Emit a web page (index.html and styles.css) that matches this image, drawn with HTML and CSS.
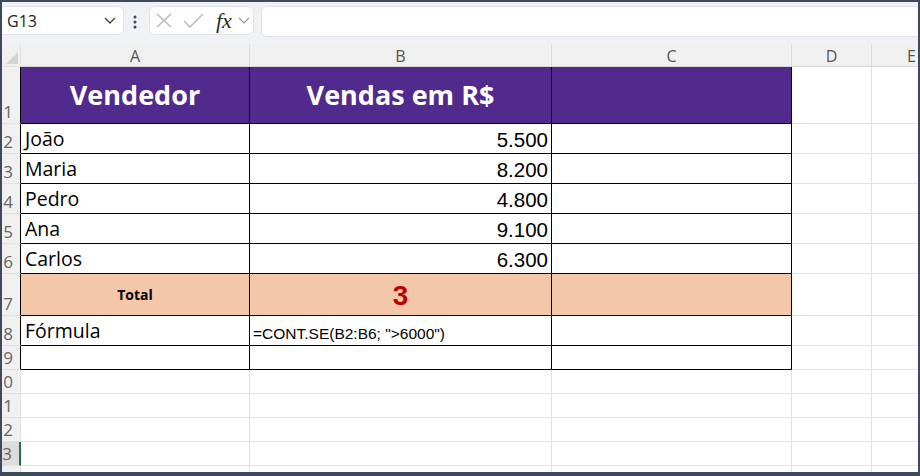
FILE: index.html
```html
<!DOCTYPE html>
<html lang="pt-BR">
<head>
  <meta charset="UTF-8">
  <meta name="viewport" content="width=device-width, initial-scale=1.0">
  <title>CONT.SE - Vendas</title>
  <link rel="stylesheet" href="styles.css">
</head>
<body>
  <div class="app">
    <div class="toolbar">
      <div class="namebox">
        <span>G13</span>
        <svg width="12" height="7" viewBox="0 0 12 7"><path d="M1 1 L6 6 L11 1" fill="none" stroke="#444" stroke-width="1.4"/></svg>
      </div>
      <svg class="grip" width="4" height="14" viewBox="0 0 4 14"><circle cx="2" cy="2" r="1.5"/><circle cx="2" cy="7" r="1.5"/><circle cx="2" cy="12" r="1.5"/></svg>
      <div class="fxbox">
        <svg width="16" height="15" viewBox="0 0 16 15"><path d="M1 1 L15 14 M15 1 L1 14" fill="none" stroke="#b4b4b4" stroke-width="1.3"/></svg>
        <svg width="21" height="15" viewBox="0 0 21 15"><path d="M1 8 L7 14 L20 1" fill="none" stroke="#b4b4b4" stroke-width="1.3"/></svg>
        <span class="fx">fx</span>
        <svg width="12" height="7" viewBox="0 0 12 7"><path d="M1 1 L6 6 L11 1" fill="none" stroke="#999" stroke-width="1.2"/></svg>
      </div>
      <div class="formula"></div>
    </div>

    <div class="sheet">
      <!-- column headers -->
      <div class="corner"></div>
      <div class="hd">A</div>
      <div class="hd">B</div>
      <div class="hd">C</div>
      <div class="hd">D</div>
      <div class="hd">E</div>

      <div class="rh tb">1</div>
      <div class="c t head">Vendedor</div>
      <div class="c t head">Vendas em R$</div>
      <div class="c t head"></div>
      <div class="c"></div><div class="c"></div>

      <div class="rh tb">2</div>
      <div class="c t name">João</div>
      <div class="c t num">5.500</div>
      <div class="c t"></div>
      <div class="c"></div><div class="c"></div>

      <div class="rh tb">3</div>
      <div class="c t name">Maria</div>
      <div class="c t num">8.200</div>
      <div class="c t"></div>
      <div class="c"></div><div class="c"></div>

      <div class="rh tb">4</div>
      <div class="c t name">Pedro</div>
      <div class="c t num">4.800</div>
      <div class="c t"></div>
      <div class="c"></div><div class="c"></div>

      <div class="rh tb">5</div>
      <div class="c t name">Ana</div>
      <div class="c t num">9.100</div>
      <div class="c t"></div>
      <div class="c"></div><div class="c"></div>

      <div class="rh tb">6</div>
      <div class="c t name">Carlos</div>
      <div class="c t num">6.300</div>
      <div class="c t"></div>
      <div class="c"></div><div class="c"></div>

      <div class="rh tb">7</div>
      <div class="c t tot label">Total</div>
      <div class="c t tot result">3</div>
      <div class="c t tot"></div>
      <div class="c"></div><div class="c"></div>

      <div class="rh tb">8</div>
      <div class="c t name">Fórmula</div>
      <div class="c t code">=CONT.SE(B2:B6; "&gt;6000")</div>
      <div class="c t"></div>
      <div class="c"></div><div class="c"></div>

      <div class="rh tb">9</div>
      <div class="c t"></div>
      <div class="c t"></div>
      <div class="c t"></div>
      <div class="c"></div><div class="c"></div>

      <div class="rh">10</div>
      <div class="c"></div><div class="c"></div><div class="c"></div><div class="c"></div><div class="c"></div>

      <div class="rh">11</div>
      <div class="c"></div><div class="c"></div><div class="c"></div><div class="c"></div><div class="c"></div>

      <div class="rh">12</div>
      <div class="c"></div><div class="c"></div><div class="c"></div><div class="c"></div><div class="c"></div>

      <div class="rh active">13</div>
      <div class="c"></div><div class="c"></div><div class="c"></div><div class="c"></div><div class="c"></div>

      <div class="rh"></div>
      <div class="c"></div><div class="c"></div><div class="c"></div><div class="c"></div><div class="c"></div>
    </div>
  </div>
</body>
</html>
```

FILE: styles.css
```css
html, body {
  margin: 0;
  padding: 0;
}
body {
  width: 920px;
  height: 476px;
  background-color: #3c4a5b;
  overflow: hidden;
  font-family: "Open Sans", "Noto Sans", sans-serif;
}
.app {
  margin: 2px 2px 0 2px;
  height: 470px;
  background-color: #ffffff;
  overflow: hidden;
}

/* formula bar */
.toolbar {
  height: 42px;
  box-sizing: border-box;
  padding-top: 4px;
  background-color: #eff1f4;
  display: flex;
  align-items: flex-start;
}
.namebox {
  width: 128px;
  height: 29px;
  margin-left: -6px;
  box-sizing: border-box;
  padding: 0 7px 0 10px;
  background-color: #ffffff;
  border: 1px solid #e1e3e6;
  border-radius: 6px;
  display: flex;
  align-items: center;
  justify-content: space-between;
  font-size: 16px;
  color: #222;
}
.grip {
  margin: 9px 0 0 9px;
  fill: #3f4750;
}
.fxbox {
  width: 105px;
  height: 29px;
  margin-left: 12px;
  box-sizing: border-box;
  padding: 0 3px 0 6px;
  background-color: #ffffff;
  border: 1px solid #e1e3e6;
  border-radius: 6px;
  display: flex;
  align-items: center;
}
.fxbox svg:nth-child(2) {
  margin-left: 11px;
}
.fx {
  margin-left: 12px;
  margin-right: 6px;
  font-family: "Liberation Serif", "DejaVu Serif", serif;
  font-style: italic;
  font-size: 22px;
  color: #2b2b2b;
  line-height: 1;
}
.formula {
  flex: 1;
  height: 29px;
  margin-left: 7px;
  margin-right: -6px;
  background-color: #ffffff;
  border: 1px solid #e1e3e6;
  border-radius: 6px;
}

/* grid */
.sheet {
  display: grid;
  grid-template-columns: 19px 229px 302px 240px 80px 80px;
  grid-template-rows: 23px 57px repeat(5, 30px) 42px 30px repeat(6, 24px);
}
.sheet > div {
  box-sizing: border-box;
  border-right: 1px solid #e1e1e1;
  border-bottom: 1px solid #e1e1e1;
  overflow: hidden;
  white-space: nowrap;
}
.corner {
  background-color: #f0f0f0;
  position: relative;
}
.corner::after {
  content: "";
  position: absolute;
  right: 2px;
  bottom: 2px;
  border-left: 12px solid transparent;
  border-bottom: 12px solid #d3d3d3;
}
.hd {
  background-color: #f0f0f0;
  color: #555;
  font-size: 16px;
  text-align: center;
  line-height: 24px;
}
.sheet > .hd {
  border-right-color: #dadada;
  border-bottom-color: #d6d6d6;
}
.rh {
  background-color: #f0f0f0;
  color: #666;
  font-size: 17px;
  padding-right: 7px;
  display: flex;
  align-items: flex-end;
  justify-content: flex-end;
  line-height: 22px;
}
.sheet > .rh.tb {
  border-right: 1px solid #000;
}
.sheet > .rh.active {
  background-color: #dcdcdc;
  border-right: 2px solid #217346;
}

.c {
  color: #000;
}
.sheet > .t {
  border-right: 1px solid #000;
  border-bottom: 1px solid #000;
}
.head {
  background-color: #522a8e;
  color: #ffffff;
  font-weight: bold;
  font-size: 27px;
  text-align: center;
  padding-top: 10px;
  line-height: 36px;
}
.name {
  font-size: 19.5px;
  padding-left: 4px;
  line-height: 30px;
}
.num {
  font-family: "Liberation Sans", Arial, sans-serif;
  font-size: 20.5px;
  text-align: right;
  padding-right: 3px;
  line-height: 32px;
}
.tot {
  background-color: #f5c7a9;
  text-align: center;
}
.label {
  font-weight: bold;
  font-size: 14px;
  line-height: 42px;
}
.result {
  font-family: "Liberation Sans", Arial, sans-serif;
  font-weight: bold;
  font-size: 28px;
  color: #c00000;
  line-height: 44px;
}
.code {
  font-family: "Liberation Sans", Arial, sans-serif;
  font-size: 15.5px;
  padding-left: 3px;
  line-height: 36px;
}
```
